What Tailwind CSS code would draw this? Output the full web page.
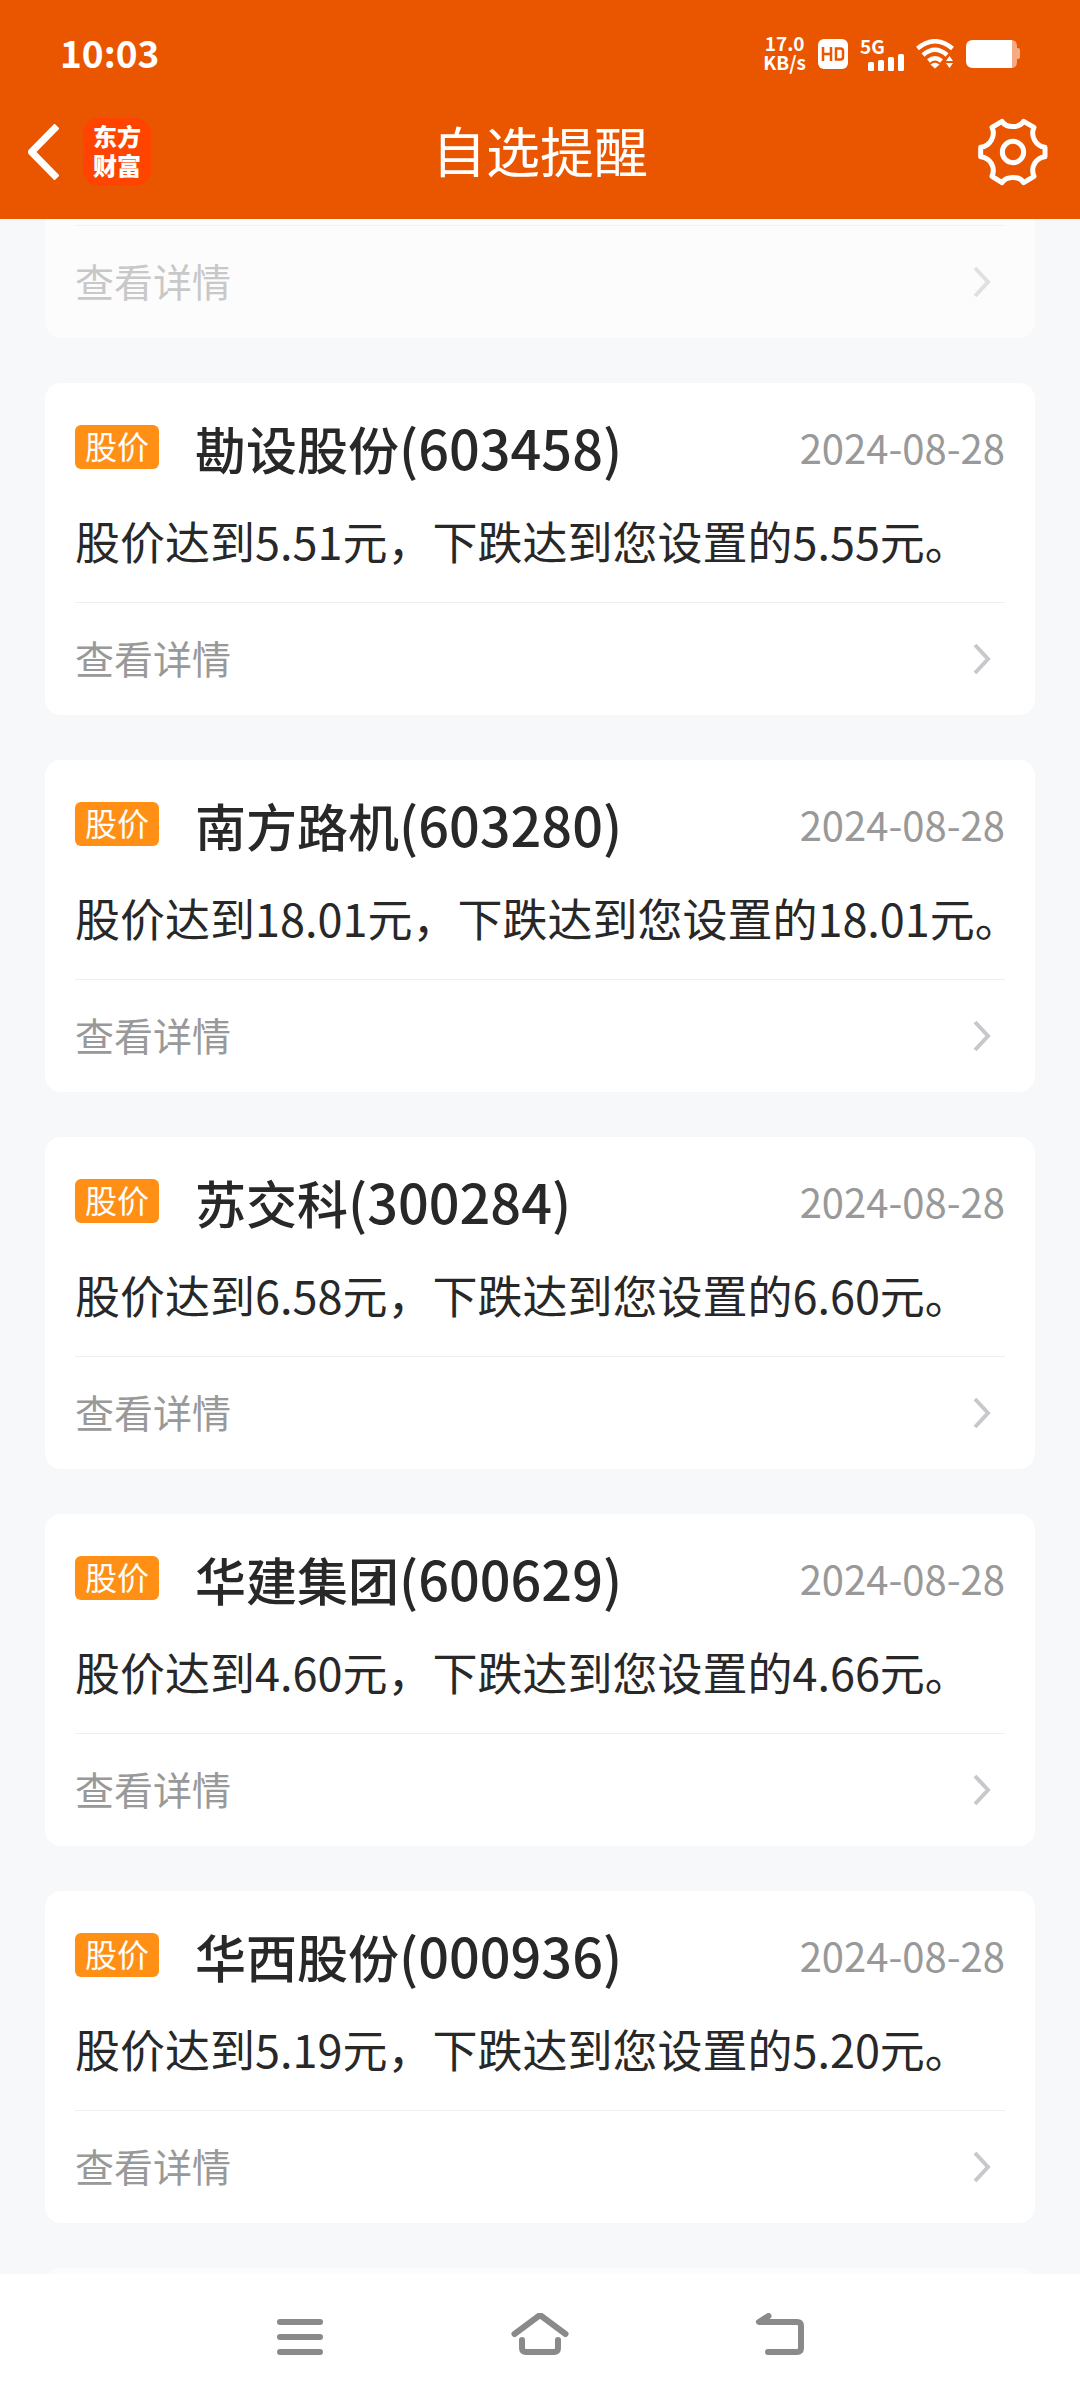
<!DOCTYPE html>
<html lang="zh-CN">

<head>
    <meta charset="utf-8">
    <meta name="viewport" content="width=device-width, initial-scale=1.0">
    <script src="https://cdn.jsdelivr.net/npm/@tailwindcss/browser@4"></script>
    <title>自选提醒</title>
</head>

<body class="flex h-screen flex-col overflow-hidden bg-[#f7f8fa] font-['Noto_Sans_CJK_SC',sans-serif] text-[#282828]">
    <header class="shrink-0 bg-[#ea5500] text-white">
        <!-- status bar -->
        <div class="flex h-[108px] items-center justify-between pr-[60px] pl-[60px]">
            <span class="pb-1 text-[37px] leading-none font-bold">10:03</span>
            <div class="flex items-center gap-3">
                <div class="flex flex-col pb-1 text-center text-[19px] leading-[19px] font-bold">
                    <span>17.0</span>
                    <span>KB/s</span>
                </div>
                <svg class="h-[30px] w-[30px]" viewBox="0 0 30 30" fill="none">
                    <rect width="30" height="30" rx="6" fill="#fff" />
                    <path d="M5 8V22M13 8V22M5 15H13M18 9.500H22.500Q25 9.500 25 12V18Q25 20.500 22.500 20.500H18Z" stroke="#ea5500" stroke-width="2.500" />
                </svg>
                <div class="relative h-[34px] w-[44px]">
                    <span class="absolute top-0 left-0 text-[19px] leading-[18px] font-bold">5G</span>
                    <svg class="absolute right-0 bottom-0 h-[17px] w-[36px]" viewBox="0 0 36 17" fill="#fff">
                        <rect x="0" y="8" width="6" height="9" rx="1.500" />
                        <rect x="10" y="6" width="6" height="11" rx="1.500" />
                        <rect x="20" y="3" width="6" height="14" rx="1.500" />
                        <rect x="30" y="0" width="6" height="17" rx="1.500" />
                    </svg>
                </div>
                <svg class="h-[30px] w-[38px]" viewBox="0 0 38 30" fill="none" stroke="#fff" stroke-width="4.500">
                    <path d="M1.500 9.500Q19 -5 36.500 9.500" />
                    <path d="M7 16Q19 5.500 31 16" />
                    <path d="M12.500 22Q19 16.500 25.500 22" />
                    <path d="M14.500 25.500Q19 22 23.500 25.500L19 29.500Z" fill="#fff" stroke="none" />
                    <path d="M30 22L33.500 17L37 22ZM30 24L33.500 29L37 24Z" fill="#fff" stroke="#ea5500" stroke-width="1" paint-order="stroke" />
                </svg>
                <svg class="h-[28px] w-[54px]" viewBox="0 0 54 28">
                    <path d="M40 0H45Q51 0 51 6V8H52Q54 8 54 10V17Q54 19 52 19H51V22Q51 28 45 28H40Z" fill="#f5aa82" />
                    <path d="M7 0H46V28H7Q0 28 0 21V7Q0 0 7 0Z" fill="#fff" />
                </svg>
            </div>
        </div>
        <!-- title bar -->
        <div class="grid h-[111px] grid-cols-[1fr_auto_1fr] items-center px-[28px] pb-6">
            <div class="flex items-center gap-6">
                <button type="button" aria-label="返回">
                    <svg class="h-[56px] w-[31px]" viewBox="2 0 31 56" fill="none" stroke="#fff" stroke-width="7">
                        <path d="M31 2L5.500 28L31 54" stroke-linejoin="round" />
                    </svg>
                </button>
                <div class="flex h-[68px] w-[68px] flex-col items-center justify-center rounded-2xl bg-[#ff4400] pb-1 text-[24px] leading-[29px] font-black">
                    <span>东方</span>
                    <span>财富</span>
                </div>
            </div>
            <h1 class="pb-1 text-[54px] leading-[60px]">自选提醒</h1>
            <button type="button" aria-label="设置" class="justify-self-end">
                <svg class="h-[68px] w-[74px]" viewBox="113 87 222 204" fill="none" stroke="#fff" stroke-width="15" stroke-linejoin="round">
                    <path d="M185 97C198 118 238 118 250 97L281 115C269 142 287 172 314 175V203C287 206 269 234 281 262L250 281C238 260 198 260 185 281L155 262C167 234 149 206 121 203V175C149 172 167 142 155 115Z" />
                    <circle cx="218" cy="189" r="32" />
                </svg>
            </button>
        </div>
    </header>

    <main id="list" class="flex min-h-0 flex-1 flex-col gap-[45px] overflow-hidden px-[45px]">
        <div class="shrink-0 rounded-b-2xl bg-[#fcfcfc] px-[30px] pt-[6px]">
            <a href="#" class="flex h-[113px] items-center justify-between border-t border-[#f3f1f1] pr-[14px] text-[39px] text-[#c8c8c8]">
                <span class="pb-1">查看详情</span>
                <svg class="h-[32px] w-[18px]" viewBox="0 0 18 32" fill="none" stroke="#e0e0e2" stroke-width="4">
                    <path d="M2 2L15 16L2 30" />
                </svg>
            </a>
        </div>
    </main>

    <nav class="flex h-[126px] shrink-0 justify-center bg-white">
        <div class="grid w-2/3 grid-cols-3 place-items-center">
            <button type="button" aria-label="菜单">
                <svg class="h-[48px] w-[60px]" viewBox="0 0 60 48" fill="none" stroke="#8a8a8a" stroke-width="6" stroke-linecap="round">
                    <path d="M10 9H50M10 24H50M10 39H50" />
                </svg>
            </button>
            <button type="button" aria-label="主页">
                <svg class="h-[48px] w-[60px]" viewBox="0 0 60 48" fill="none" stroke="#8a8a8a" stroke-width="6" stroke-linecap="round" stroke-linejoin="round">
                    <path d="M4.500 21L30 2L55.500 21" />
                    <path d="M12 27V35Q12 39 16 39H44Q48 39 48 35V27" />
                </svg>
            </button>
            <button type="button" aria-label="后退">
                <svg class="h-[48px] w-[60px]" viewBox="0 0 60 48" fill="none" stroke="#8a8a8a" stroke-width="6" stroke-linecap="round" stroke-linejoin="round">
                    <path d="M18.500 3L9 9H47Q51 9 51 13V35Q51 39 47 39H18" />
                </svg>
            </button>
        </div>
    </nav>

    <script type="text/javascript">
        var alerts = [
            { name: '勘设股份', code: '603458', price: '5.51', target: '5.55' },
            { name: '南方路机', code: '603280', price: '18.01', target: '18.01' },
            { name: '苏交科', code: '300284', price: '6.58', target: '6.60' },
            { name: '华建集团', code: '600629', price: '4.60', target: '4.66' },
            { name: '华西股份', code: '000936', price: '5.19', target: '5.20' }
        ];
        var list = document.getElementById('list');

        alerts.forEach(function (a) {
            list.insertAdjacentHTML('beforeend', `
                <article class="shrink-0 rounded-2xl bg-white px-[30px] pt-[34px]">
                    <div class="flex h-[60px] items-center">
                        <span class="flex h-[44px] w-[84px] items-center justify-center rounded-md bg-[#ff9015] pb-1 text-[32px] leading-[40px] text-white">股价</span>
                        <h2 class="ml-[36px] flex-1 text-[51px] leading-[60px] font-medium">${a.name}<span class="text-[54px]">(${a.code})</span></h2>
                        <time class="text-[40px] leading-[60px] text-[#999999]">2024-08-28</time>
                    </div>
                    <p class="mt-[34px] mb-[31px] text-[45px] leading-[60px] whitespace-nowrap">股价达到${a.price}元，下跌达到您设置的${a.target}元。</p>
                    <a href="#" class="flex h-[113px] items-center justify-between border-t border-[#eeeeee] pr-[14px] text-[39px] text-[#999999]">
                        <span class="pb-1">查看详情</span>
                        <svg class="h-[32px] w-[18px]" viewBox="0 0 18 32" fill="none" stroke="#c8c8cc" stroke-width="4">
                            <path d="M2 2L15 16L2 30" />
                        </svg>
                    </a>
                </article>`);
        });
        // top edge of the next card
        list.insertAdjacentHTML('beforeend', '<div class="h-[40px] shrink-0 rounded-t-2xl bg-[#fcfcfc]"></div>');
    </script>
</body>

</html>
